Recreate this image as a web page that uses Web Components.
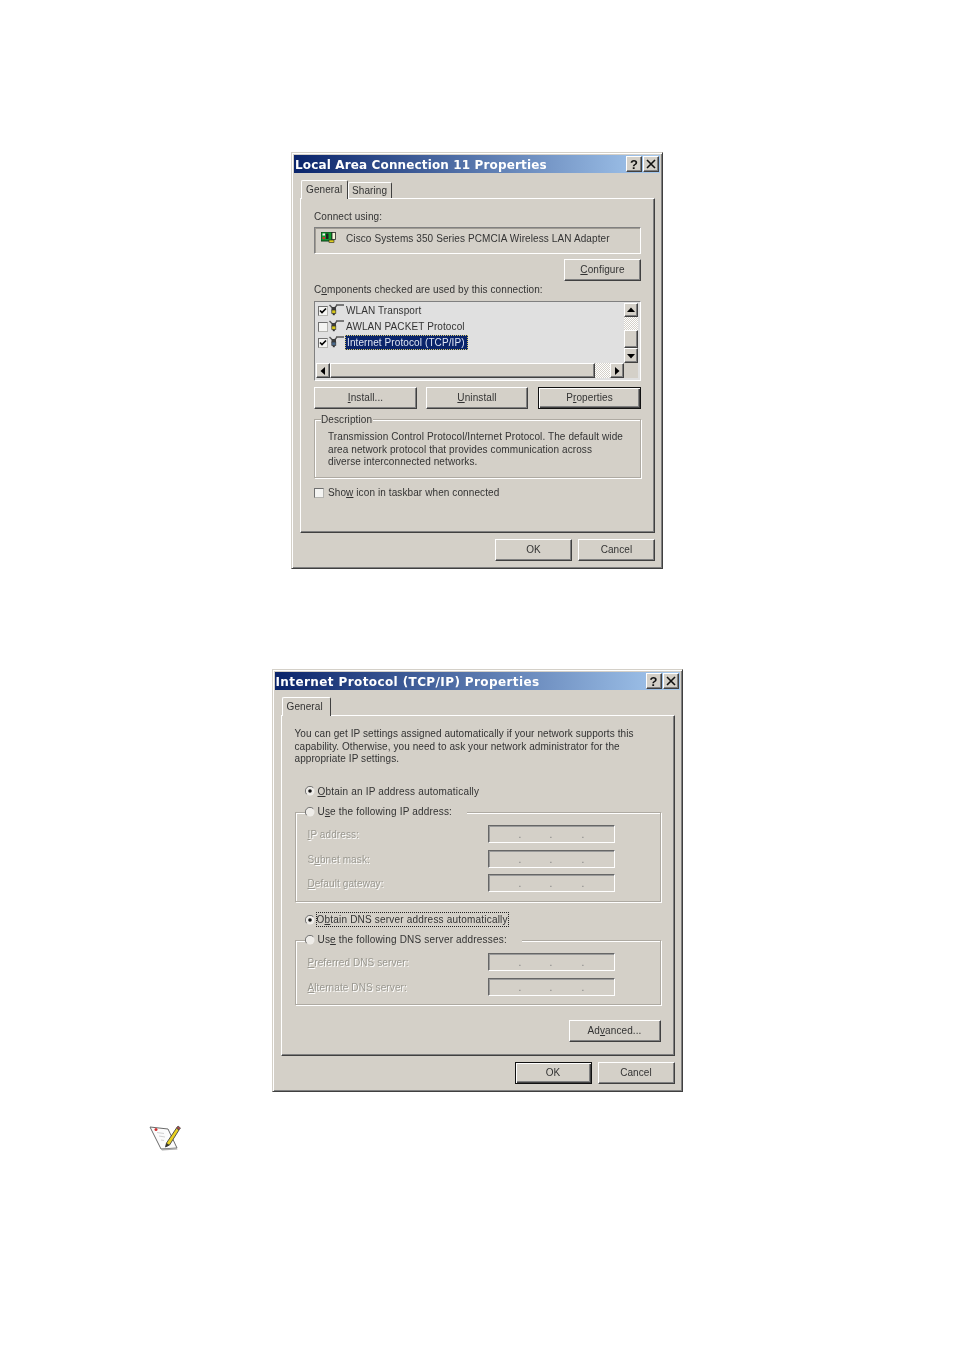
<!DOCTYPE html>
<html>
<head>
<meta charset="utf-8">
<title>Network properties</title>
<style>
  html, body { margin: 0; background: #fff; }
  body { display: flex; flex-direction: column; align-items: center; padding-top: 152px; height: 1350px; box-sizing: border-box; overflow: hidden;
    font: 10px "Liberation Sans", Arial, sans-serif; letter-spacing: .1px; color: #333; }
  lan-dialog { margin-bottom: 100px; }
  note-icon { align-self: flex-start; margin: 30px 0 0 149px; }
</style>
</head>
<body>
<lan-dialog></lan-dialog>
<tcpip-dialog></tcpip-dialog>
<note-icon></note-icon>

<script>
// Win2000 style dialog pieces

const FACE = '#d4d0c8';
const RAISED = `border: 1px solid; border-color: #fff #404040 #404040 #fff; box-shadow: inset -1px -1px 0 #808080; background: ${FACE};`;

function tpl(html) {
  const t = document.createElement('template');
  t.innerHTML = html;
  return t;
}

class WinElement extends HTMLElement {
  constructor() {
    super();
    const shadowRoot = this.attachShadow({ mode: 'open' });
    shadowRoot.appendChild(this.constructor.template.content.cloneNode(true));
  }
}

class WinDialog extends WinElement {
  static template = tpl(`
  <style>
  :host { display: block; box-sizing: border-box; padding: 2px 7px 7px 8px; background: ${FACE};
    border: 1px solid; border-color: #d4d0c8 #404040 #404040 #d4d0c8;
    box-shadow: inset 1px 1px 0 #fff, inset -1px -1px 0 #808080; filter: blur(.3px); }
  #bar { display: flex; align-items: center; justify-content: space-between; height: 18px; margin: 0 -5px 0 -6px; padding: 0 1px 0 1px;
    background: linear-gradient(90deg, #0a246a, #a6caf0); }
  #caption { font: bold 12px "DejaVu Sans", sans-serif; letter-spacing: var(--caption-spacing, 0); color: #fff; white-space: nowrap; padding-top: 1px; }
  #btns { display: flex; gap: 1px; }
  .b { box-sizing: border-box; width: 16px; height: 16px; ${RAISED} display: flex; align-items: center; justify-content: center;
    font: bold 13px "Liberation Sans", sans-serif; color: #111; letter-spacing: 0; }
  #tabs { display: flex; align-items: flex-end; height: 18px; margin: 7px 0 0 1px; position: relative; z-index: 1; }
  #panel { box-sizing: border-box; border: 1px solid; border-color: #fff #404040 #404040 #fff;
    box-shadow: inset -1px -1px 0 #808080; padding: 11px 13px 0 13px; }
  #foot { display: flex; justify-content: flex-end; gap: 6px; margin-top: 6px; }
  </style>
  <div id="bar">
    <span id="caption"></span>
    <div id="btns">
      <div class="b">?</div>
      <div class="b"><svg width="10" height="10" viewBox="0 0 10 10"><path d="M1 1l8 8M9 1l-8 8" stroke="#111" stroke-width="1.6"/></svg></div>
    </div>
  </div>
  <div id="tabs"><slot name="tabs"></slot></div>
  <div id="panel"><slot></slot></div>
  <div id="foot"><slot name="foot"></slot></div>
  `);
  connectedCallback() {
    this.shadowRoot.querySelector('#caption').textContent = this.getAttribute('caption');
    this.shadowRoot.querySelector('#panel').style.height = this.getAttribute('panel-height') + 'px';
  }
}

class WinTab extends WinElement {
  static template = tpl(`
  <style>
  :host { display: block; box-sizing: border-box; height: 16px; padding: 1px 0 0 3px; line-height: 13px; background: ${FACE};
    border: 1px solid; border-bottom: 0; border-color: #fff #404040 #404040 #fff; border-radius: 2px 2px 0 0; white-space: nowrap; }
  :host([active]) { height: 19px; margin-bottom: -1px; padding: 2px 0 0 4px; }
  </style>
  <slot></slot>
  `);
}

class WinButton extends WinElement {
  static template = tpl(`
  <style>
  :host { display: flex; align-items: center; justify-content: center; box-sizing: border-box; width: 77px; height: 22px;
    ${RAISED} padding-bottom: 2px; }
  :host([default]) { border-color: #111; box-shadow: inset 1px 1px 0 #fff, inset -1px -1px 0 #404040, inset -2px -2px 0 #808080; }
  </style>
  <slot></slot>
  `);
}

class WinGroup extends WinElement {
  static template = tpl(`
  <style>
  :host { display: block; box-sizing: border-box; border: 1px solid #aeaaa2; box-shadow: 1px 1px 0 #fff, inset 1px 1px 0 #fff; }
  #legend { width: fit-content; height: 14px; line-height: 14px; margin: var(--legend-top, -8px) 0 0 var(--legend-x, 9px); padding-right: 1px; background: ${FACE}; }
  </style>
  <div id="legend"><slot name="legend"></slot></div>
  <slot></slot>
  `);
}

class WinCheck extends WinElement {
  static template = tpl(`
  <style>
  :host { display: block; box-sizing: border-box; width: 10px; height: 10px; flex: none; background: #f4f4f2;
    border: 1px solid; border-color: #707070 #b4b4b0 #b4b4b0 #707070; }
  svg { display: none; }
  :host([checked]) svg { display: block; }
  </style>
  <svg width="8" height="8" viewBox="0 0 8 8"><path d="M1 3.5l2 2 4-4" fill="none" stroke="#000" stroke-width="1.6"/></svg>
  `);
}

class WinRadio extends WinElement {
  static template = tpl(`
  <style>
  :host { display: block; width: 10px; height: 10px; flex: none; }
  svg { display: block; }
  #dot { display: none; }
  :host([checked]) #dot { display: block; }
  </style>
  <svg width="10" height="10" viewBox="0 0 10 10">
    <circle cx="5" cy="5" r="4.5" fill="#eeece8"/>
    <path d="M1.7 8.3A4.6 4.6 0 0 1 8.3 1.7" fill="none" stroke="#707070"/>
    <circle id="dot" cx="5" cy="5" r="1.8" fill="#111"/>
  </svg>
  `);
}

class WinField extends WinElement {
  static template = tpl(`
  <style>
  :host { display: grid; grid-template-columns: 33px 31px 32px; justify-content: start; align-items: center; box-sizing: border-box;
    width: 127px; height: 18px; background: ${FACE}; color: #808080; text-align: right; text-shadow: none;
    border: 1px solid; border-color: #666 #fff #fff #666; box-shadow: inset 1px 1px 0 #999; }
  </style>
  <span>.</span><span>.</span><span>.</span>
  `);
}

class ScrollBtn extends WinElement {
  static template = tpl(`
  <style>
  :host { display: flex; align-items: center; justify-content: center; box-sizing: border-box; ${RAISED} }
  path { fill: #000; }
  </style>
  <svg width="8" height="8" viewBox="0 0 8 8"><path d=""/></svg>
  `);
  connectedCallback() {
    const shapes = { up: 'M4 1.5L8 6H0z', down: 'M4 6.5L0 2h8z', left: 'M1.5 4L6 0v8z', right: 'M6.5 4L2 0v8z' };
    this.shadowRoot.querySelector('path').setAttribute('d', shapes[this.getAttribute('dir')]);
  }
}

class ProtoIcon extends WinElement {
  static template = tpl(`
  <style>
  :host { display: block; width: 16px; height: 14px; flex: none; }
  svg { display: block; }
  #plug { fill: #d8c818; }
  :host([sel]) #plug { fill: #4a6a8c; }
  </style>
  <svg width="16" height="14" viewBox="0 0 16 14">
    <path d="M0.5 1L3 3.5M8 1L6 3.5M7 1h8" fill="none" stroke="#555" stroke-width="1.4"/>
    <rect x="2.5" y="3" width="4.5" height="3.5" fill="#3c3c3c"/>
    <rect id="plug" x="2.8" y="6" width="4" height="3.6" stroke="#333" stroke-width=".7"/>
    <rect x="3.8" y="9.6" width="2" height="1.6" fill="#333"/>
  </svg>
  `);
}

class NicIcon extends WinElement {
  static template = tpl(`
  <style>
  :host { display: block; width: 16px; height: 11px; flex: none; }
  svg { display: block; }
  </style>
  <svg width="16" height="11" viewBox="0 0 16 11">
    <rect x="0" y="0" width="11" height="9" fill="#109a30" stroke="#0a3a14"/>
    <rect x="1.5" y="1.5" width="2.5" height="2" fill="#f0f0f0"/>
    <rect x="1.5" y="5" width="2.5" height="2" fill="#d03030"/>
    <rect x="5" y="1.5" width="2.5" height="5.5" fill="#202020"/>
    <rect x="11" y="0.5" width="3.5" height="7" fill="#f4f4d8" stroke="#222" stroke-width=".8"/>
    <rect x="8" y="8" width="5" height="2.5" fill="#e0d020" stroke="#222" stroke-width=".6"/>
  </svg>
  `);
}

class NoteIcon extends WinElement {
  static template = tpl(`
  <style>
  :host { display: block; width: 32px; height: 30px; }
  svg { display: block; filter: blur(.4px); }
  </style>
  <svg width="32" height="30" viewBox="0 0 32 30">
    <path d="M1 5L19 7L28 26L12 27Z" fill="#fbfbfb" stroke="#6a6a6a" stroke-width="1"/>
    <path d="M12 27L28 26L28.5 27.5L13 28.5Z" fill="#aaa"/>
    <path d="M8 10.5l7 1M10 14l6 1M12 18l3 .5" stroke="#d0d0d0"/>
    <circle cx="7" cy="7.5" r="1.5" fill="#d03030"/>
    <path d="M17.5 21L27.5 6L30 8L20.5 23L16.5 25Z" fill="#e8d020" stroke="#444" stroke-width=".9"/>
    <path d="M27.5 6L29 4L31.5 6L30 8Z" fill="#a84848" stroke="#444" stroke-width=".7"/>
    <path d="M16.5 25l1-4 3 2z" fill="#333"/>
  </svg>
  `);
}

const FORM_STYLE = `
  :host { display: block; }
  .lbl { height: 12px; line-height: 14px; white-space: nowrap; }
  .row { display: flex; align-items: center; }
  .end { display: flex; justify-content: flex-end; }
`;

class LanDialog extends WinElement {
  static template = tpl(`
  <style>
  ${FORM_STYLE}
  :host { width: 372px; --caption-spacing: .14px; }
  #adapter { box-sizing: border-box; height: 27px; margin-top: 5px; padding: 4px 0 0 6px; border: 1px solid; border-color: #808080 #fff #fff #808080;
    box-shadow: inset 1px 1px 0 #a09c94; display: flex; align-items: flex-start; }
  #adapter span { margin: 1px 0 0 9px; white-space: nowrap; }
  #list { box-sizing: border-box; height: 80px; margin-top: 6px; padding: 1px 2px 2px 1px; border: 1px solid; border-color: #808080 #fff #fff #808080;
    display: grid; grid-template-columns: 1fr 14px; grid-template-rows: 60px 15px; background: #e0e0e0; }
  .item { display: flex; align-items: center; height: 16px; padding-left: 2px; white-space: nowrap; color: #333; }
  .item win-check { width: 10px; height: 10px; margin: 0 1px 0 0; }
  .item span { margin: 0 0 2px; padding: 0 3px 0 1px; line-height: 15px; }
  .item.sel span { background: #0a246a; color: #dfe6f5; outline: 1px dotted #d8c868; outline-offset: -1px; padding-left: 2px; }
  .v { display: grid; grid-template-rows: 14px 13px 18px 15px; }
  .h { display: grid; grid-template-columns: 14px 265px 15px 14px; grid-column: 1; }
  .track { background: repeating-conic-gradient(#fff 0 25%, #d4d0c8 0 50%) 0 0 / 2px 2px; }
  .thumb { box-sizing: border-box; ${RAISED} }
  #corner { background: ${FACE}; }
  #actions { display: flex; margin-top: 6px; }
  #actions win-button { width: 103px; }
  #actions win-button:nth-child(2) { width: 102px; margin: 0 10px 0 9px; }
  win-group { height: 59px; margin-top: 10px; --legend-top: -7px; --legend-x: 6px; }
  #desc { margin: 4px 0 0 13px; line-height: 12.5px; white-space: nowrap; }
  #show { margin-top: 8px; height: 12px; gap: 4px; }
  #show win-check { margin-top: 2px; }
  u { text-underline-offset: 1px; }
  </style>
  <win-dialog caption="Local Area Connection 11 Properties" panel-height="335">
    <win-tab slot="tabs" active style="width:47px">General</win-tab>
    <win-tab slot="tabs" style="width:44px">Sharing</win-tab>

    <div class="lbl">Connect using:</div>
    <div id="adapter"><nic-icon></nic-icon><span>Cisco Systems 350 Series PCMCIA Wireless LAN Adapter</span></div>
    <div class="end" style="margin-top:5px"><win-button><span><u>C</u>onfigure</span></win-button></div>
    <div class="lbl" style="margin-top:2px">C<u>o</u>mponents checked are used by this connection:</div>

    <div id="list">
      <div id="rows">
        <div class="item"><win-check checked></win-check><proto-icon></proto-icon><span>WLAN Transport</span></div>
        <div class="item"><win-check></win-check><proto-icon></proto-icon><span>AWLAN PACKET Protocol</span></div>
        <div class="item sel"><win-check checked></win-check><proto-icon sel></proto-icon><span>Internet Protocol (TCP/IP)</span></div>
      </div>
      <div class="v">
        <scroll-btn dir="up"></scroll-btn><div class="track"></div><div class="thumb"></div><scroll-btn dir="down"></scroll-btn>
      </div>
      <div class="h">
        <scroll-btn dir="left"></scroll-btn><div class="thumb"></div><div class="track"></div><scroll-btn dir="right"></scroll-btn>
      </div>
      <div id="corner"></div>
    </div>

    <div id="actions">
      <win-button><span><u>I</u>nstall...</span></win-button>
      <win-button><span><u>U</u>ninstall</span></win-button>
      <win-button default><span>P<u>r</u>operties</span></win-button>
    </div>

    <win-group>
      <span slot="legend">Description</span>
      <div id="desc">Transmission Control Protocol/Internet Protocol. The default wide<br>area network protocol that provides communication across<br>diverse interconnected networks.</div>
    </win-group>

    <div class="row" id="show"><win-check></win-check><div class="lbl">Sho<u>w</u> icon in taskbar when connected</div></div>

    <win-button slot="foot">OK</win-button>
    <win-button slot="foot">Cancel</win-button>
  </win-dialog>
  `);
}

class TcpipDialog extends WinElement {
  static template = tpl(`
  <style>
  ${FORM_STYLE}
  :host { width: 411px; --caption-spacing: .4px; }
  #intro { line-height: 12.5px; height: 38px; margin-top: 1px; white-space: nowrap; letter-spacing: .08px; }
  .opt { display: flex; align-items: center; gap: 3px; height: 14px; margin-left: 10px; white-space: nowrap; letter-spacing: .2px; }
  #leg1, #leg2 { display: flex; align-items: center; gap: 3px; padding: 0 14px 0 0; white-space: nowrap; letter-spacing: .18px; }
  #g1 { height: 90px; margin-top: 14px; }
  #g2 { height: 65px; margin-top: 13px; }
  .f { display: flex; align-items: center; justify-content: space-between; margin: 7px 45px 0 12px; color: #9a9890; text-shadow: 1px 1px 0 #fff; }
  .f.t { margin-top: 6px; }
  .f.first { margin-top: 6px; }
  #dns { height: 15px; margin-top: 10px; }
  #dns span { box-sizing: border-box; height: 15px; line-height: 13px; outline: 1px dotted #222; outline-offset: -1px; padding: 1px; margin-left: -2px; }
  u { text-underline-offset: 1px; }
  </style>
  <win-dialog caption="Internet Protocol (TCP/IP) Properties" panel-height="341">
    <win-tab slot="tabs" active style="width:49px">General</win-tab>

    <div id="intro">You can get IP settings assigned automatically if your network supports this<br>capability. Otherwise, you need to ask your network administrator for the<br>appropriate IP settings.</div>

    <div class="opt" style="margin-top:18px"><win-radio checked></win-radio><div><u>O</u>btain an IP address automatically</div></div>

    <win-group id="g1">
      <div slot="legend" id="leg1"><win-radio></win-radio><div>U<u>s</u>e the following IP address:</div></div>
      <div class="f first"><span><u>I</u>P address:</span><win-field></win-field></div>
      <div class="f"><span>S<u>u</u>bnet mask:</span><win-field></win-field></div>
      <div class="f t"><span><u>D</u>efault gateway:</span><win-field></win-field></div>
    </win-group>

    <div class="opt" id="dns"><win-radio checked></win-radio><span>O<u>b</u>tain DNS server address automatically</span></div>

    <win-group id="g2">
      <div slot="legend" id="leg2"><win-radio></win-radio><div>Us<u>e</u> the following DNS server addresses:</div></div>
      <div class="f first"><span><u>P</u>referred DNS server:</span><win-field></win-field></div>
      <div class="f"><span><u>A</u>lternate DNS server:</span><win-field></win-field></div>
    </win-group>

    <div class="end" style="margin-top:15px"><win-button style="width:92px"><span>Ad<u>v</u>anced...</span></win-button></div>

    <win-button slot="foot" default>OK</win-button>
    <win-button slot="foot">Cancel</win-button>
  </win-dialog>
  `);
}

customElements.define('win-dialog', WinDialog);
customElements.define('win-tab', WinTab);
customElements.define('win-button', WinButton);
customElements.define('win-group', WinGroup);
customElements.define('win-check', WinCheck);
customElements.define('win-radio', WinRadio);
customElements.define('win-field', WinField);
customElements.define('scroll-btn', ScrollBtn);
customElements.define('proto-icon', ProtoIcon);
customElements.define('nic-icon', NicIcon);
customElements.define('note-icon', NoteIcon);
customElements.define('lan-dialog', LanDialog);
customElements.define('tcpip-dialog', TcpipDialog);
</script>
</body>
</html>
